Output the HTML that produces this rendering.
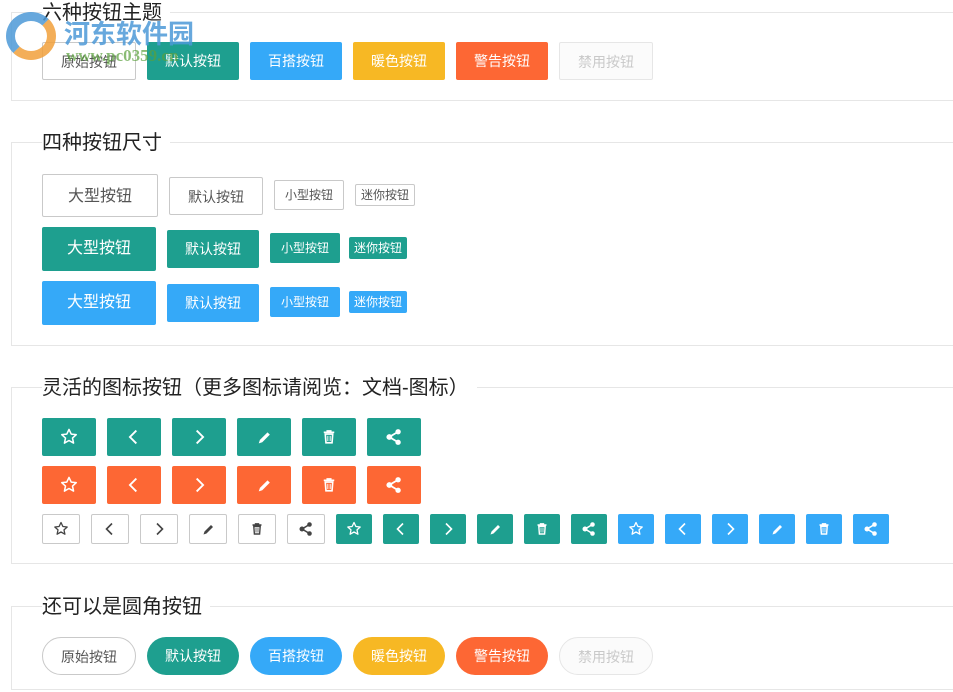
<!DOCTYPE html>
<html><head><meta charset="utf-8"><style>
*{margin:0;padding:0;box-sizing:border-box}
body{width:953px;height:692px;background:#fff;position:relative;overflow:hidden;font-family:"Liberation Sans","Noto Sans CJK SC",sans-serif;color:#333}
.fs{position:absolute;left:11px;width:960px;border:1px solid #e6e6e6;border-right:none}
.lg{position:absolute;left:42px;font-size:20px;font-weight:normal;background:#fff;padding:0 8px 0 0;color:#222;line-height:26px}
.b{position:absolute;height:38px;line-height:38px;text-align:center;font-size:14px;color:#fff;border-radius:2px;white-space:nowrap}
.p{background:#fff;border:1px solid #c9c9c9;color:#555}
.t{background:#1e9f8f}.n{background:#35a9f8}.w{background:#f7b824}.d{background:#fd6734}
.x{background:#fbfbfb;border:1px solid #e6e6e6;color:#c9c9c9}
.r{border-radius:19px}
.i svg{position:absolute;left:50%;top:50%;transform:translate(-50%,-50%)}
</style></head><body>

<div class="fs" style="top:12px;height:89px"></div>
<div class="lg" style="top:0px">六种按钮主题</div>
<div class="b p" style="left:42px;top:42px;width:94px">原始按钮</div>
<div class="b t" style="left:147px;top:42px;width:92px">默认按钮</div>
<div class="b n" style="left:250px;top:42px;width:92px">百搭按钮</div>
<div class="b w" style="left:353px;top:42px;width:92px">暖色按钮</div>
<div class="b d" style="left:456px;top:42px;width:92px">警告按钮</div>
<div class="b x" style="left:559px;top:42px;width:94px">禁用按钮</div>

<!-- watermark -->
<div style="position:absolute;left:6px;top:12px;width:50px;height:48px;border-radius:50%;border:9px solid #4d9ad8;border-right-color:#f2a03c;border-bottom-color:#f2a03c;opacity:.85"></div>
<div style="position:absolute;left:64px;top:14px;font-size:26px;font-weight:bold;color:#4d9ad8;opacity:.85">河东软件园</div>
<div style="position:absolute;left:66px;top:46px;font-size:17px;font-weight:bold;color:#5aa03c;opacity:.7;font-family:'Liberation Serif',serif">www.pc0359.cn</div>

<div class="fs" style="top:142px;height:204px"></div>
<div class="lg" style="top:130px">四种按钮尺寸</div>
<div class="b p" style="left:42px;top:174px;width:116px;height:43px;line-height:43px;font-size:16px">大型按钮</div>
<div class="b p" style="left:169px;top:177px;width:94px">默认按钮</div>
<div class="b p" style="left:274px;top:180px;width:70px;height:30px;line-height:28px;font-size:12px">小型按钮</div>
<div class="b p" style="left:355px;top:184px;width:60px;height:22px;line-height:20px;font-size:12px">迷你按钮</div>
<div class="b t" style="left:42px;top:227px;width:114px;height:44px;line-height:44px;font-size:16px">大型按钮</div>
<div class="b t" style="left:167px;top:230px;width:92px">默认按钮</div>
<div class="b t" style="left:270px;top:233px;width:70px;height:30px;line-height:30px;font-size:12px">小型按钮</div>
<div class="b t" style="left:349px;top:237px;width:58px;height:22px;line-height:22px;font-size:12px">迷你按钮</div>
<div class="b n" style="left:42px;top:281px;width:114px;height:44px;line-height:44px;font-size:16px">大型按钮</div>
<div class="b n" style="left:167px;top:284px;width:92px">默认按钮</div>
<div class="b n" style="left:270px;top:287px;width:70px;height:30px;line-height:30px;font-size:12px">小型按钮</div>
<div class="b n" style="left:349px;top:291px;width:58px;height:22px;line-height:22px;font-size:12px">迷你按钮</div>

<div class="fs" style="top:387px;height:177px"></div>
<div class="lg" style="top:375px">灵活的图标按钮（更多图标请阅览：文档-图标）</div>
<div id="icons"></div>

<div class="fs" style="top:606px;height:84px"></div>
<div class="lg" style="top:594px">还可以是圆角按钮</div>
<div class="b p r" style="left:42px;top:637px;width:94px">原始按钮</div>
<div class="b t r" style="left:147px;top:637px;width:92px">默认按钮</div>
<div class="b n r" style="left:250px;top:637px;width:92px">百搭按钮</div>
<div class="b w r" style="left:353px;top:637px;width:92px">暖色按钮</div>
<div class="b d r" style="left:456px;top:637px;width:92px">警告按钮</div>
<div class="b x r" style="left:559px;top:637px;width:94px">禁用按钮</div>

<script>
function ic(k,c,z){
var s='<svg width="'+z+'" height="'+z+'" viewBox="0 0 18 18" fill="none" stroke="'+c+'" stroke-width="1.3">';
if(k==0)s+='<path d="M9 2.5l1.9 4 4.3.5-3.2 2.9.9 4.3L9 12l-3.9 2.2.9-4.3L2.8 7l4.3-.5z" stroke-linejoin="round"/>';
if(k==1)s+='<path d="M11 3.5L5.5 9l5.5 5.5" stroke-width="1.6"/>';
if(k==2)s+='<path d="M7 3.5l5.5 5.5-5.5 5.5" stroke-width="1.6"/>';
if(k==3)s+='<path d="M4.5 14.5l1-3 6.5-6.5 2 2-6.5 6.5z" fill="'+c+'" stroke="none"/>';
if(k==4)s+='<path d="M4.5 5h9M7.5 5V3.8h3V5M5.8 6.5h6.4l-.6 7.5H6.4z" stroke-width="1.4"/><path d="M8 8v4.5M10 8v4.5" stroke-width=".8"/>';
if(k==5)s+='<g fill="'+c+'" stroke="none"><circle cx="12.5" cy="4.5" r="2.3"/><circle cx="12.5" cy="13.5" r="2.3"/><circle cx="5" cy="9" r="2.5"/></g><path d="M12.5 4.5L5 9l7.5 4.5" stroke-width="1.6"/>';
return s+'</svg>';}
var h='';
for(var r=0;r<2;r++)for(var i=0;i<6;i++)h+='<div class="b i '+(r?'d':'t')+'" style="left:'+(42+65*i)+'px;top:'+(418+48*r)+'px;width:54px">'+ic(i,'#fff',21)+'</div>';
for(var i=0;i<6;i++)h+='<div class="b i p" style="left:'+(42+49*i)+'px;top:514px;width:38px;height:30px">'+ic(i,'#444',18)+'</div>';
for(var i=0;i<12;i++)h+='<div class="b i '+(i<6?'t':'n')+'" style="left:'+(336+47*i)+'px;top:514px;width:36px;height:30px">'+ic(i%6,'#fff',18)+'</div>';
document.getElementById('icons').innerHTML=h;
</script>
</body></html>
